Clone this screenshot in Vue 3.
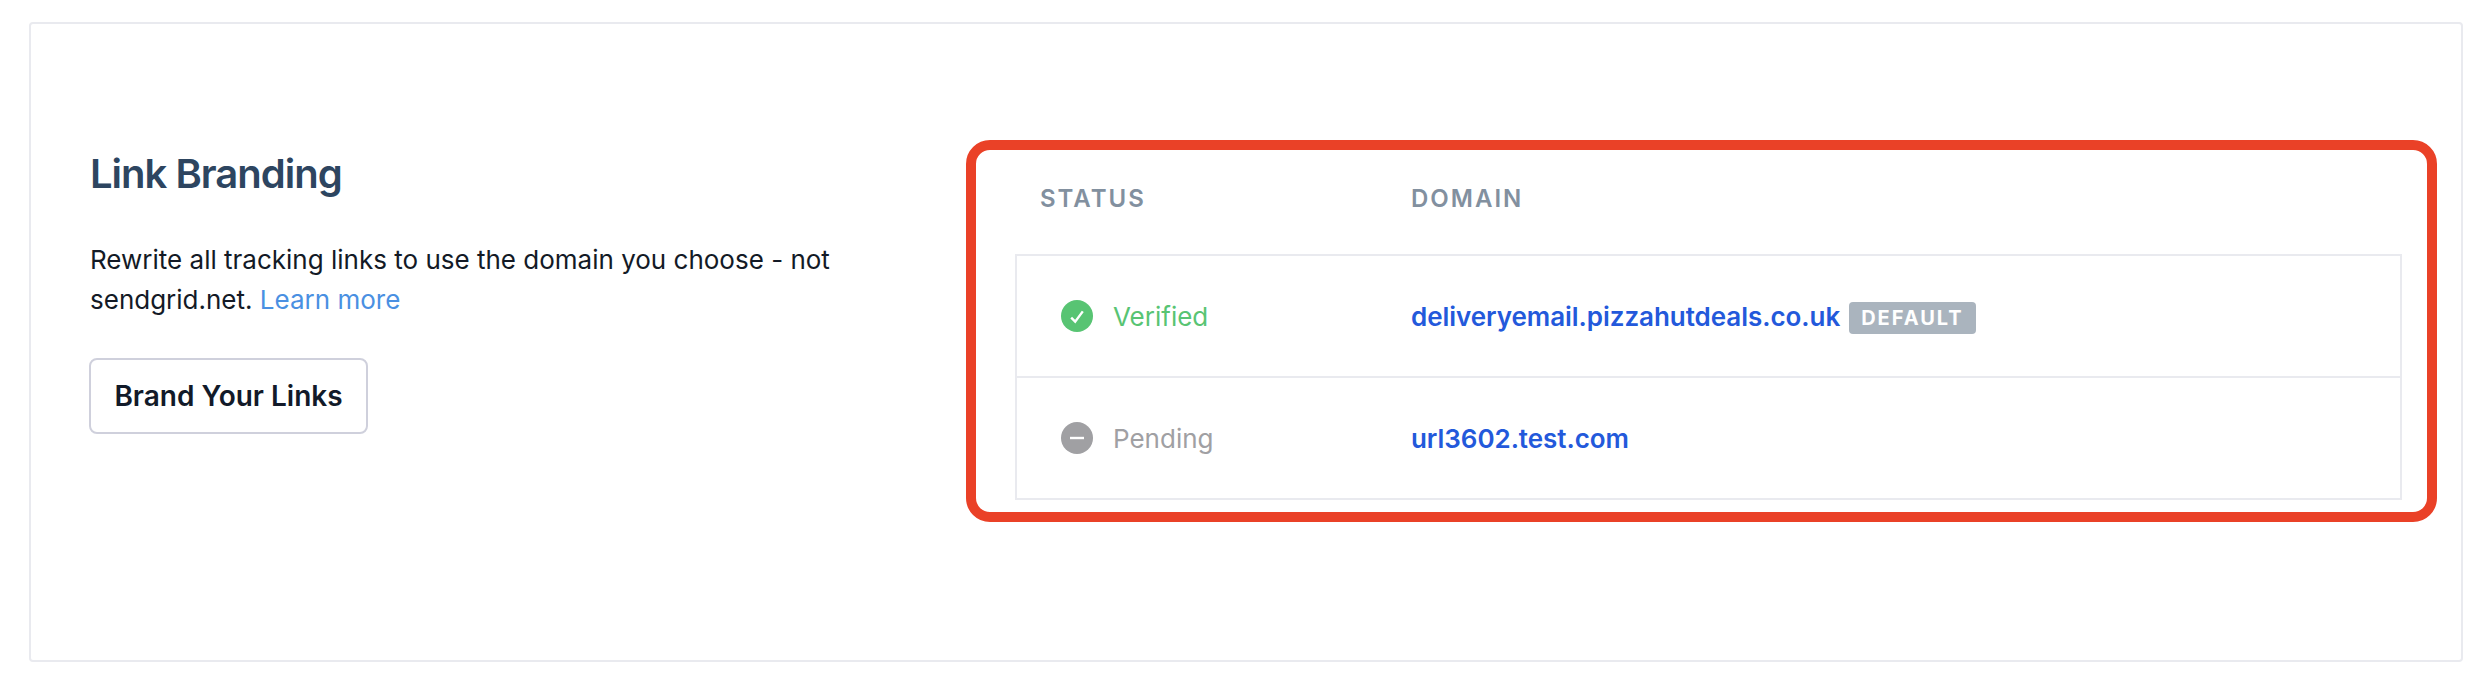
<template>
  <div class="page">
    <section class="card">
      <div class="intro">
        <h2 class="title">Link Branding</h2>
        <p class="desc">
          Rewrite all tracking links to use the domain you choose - not sendgrid.net.
          <a class="learn">Learn more</a>
        </p>
        <button class="brand-btn">Brand Your Links</button>
      </div>

      <div class="highlight">
        <div class="head">
          <span class="head-status">STATUS</span>
          <span>DOMAIN</span>
        </div>
        <div class="table">
          <div class="row" v-for="row in rows" :key="row.domain">
            <div class="status" :class="row.kind">
              <svg class="dot" viewBox="0 0 32 32" width="32" height="32">
                <circle cx="16" cy="16" r="16" />
                <path v-if="row.kind === 'verified'" d="M10.2 17.6L14.2 21.6L21.8 11.4" />
                <path v-else d="M9 16h14" />
              </svg>
              <span>{{ row.label }}</span>
            </div>
            <div class="domain">
              <a class="domain-link">{{ row.domain }}</a>
              <span class="tag" v-if="row.isDefault">DEFAULT</span>
            </div>
          </div>
        </div>
      </div>
    </section>
  </div>
</template>

<script setup>
const rows = [
  { kind: 'verified', label: 'Verified', domain: 'deliveryemail.pizzahutdeals.co.uk', isDefault: true },
  { kind: 'pending', label: 'Pending', domain: 'url3602.test.com', isDefault: false },
]
</script>

<style>
html,
body {
  background: #fff;
}
</style>

<style scoped>
.page {
  padding: 22px 23px 0 29px;
  font-family: Inter, "Liberation Sans", sans-serif;
}
.card {
  display: flex;
  align-items: flex-start;
  height: 640px;
  box-sizing: border-box;
  padding: 116px 24px 0 59px;
  border: 2px solid #e9eaef;
  border-radius: 4px;
}
.intro {
  width: 876px;
  flex-shrink: 0;
}
.title {
  margin: 12px 0 0;
  font-size: 40px;
  line-height: 44px;
  font-weight: 600;
  letter-spacing: -1px;
  color: #2d4560;
}
.desc {
  width: 780px;
  margin: 44px 0 0;
  font-size: 26px;
  line-height: 40px;
  color: #131a26;
}
.learn {
  color: #4a90e2;
}
.brand-btn {
  display: block;
  height: 76px;
  width: 279px;
  margin: 38px 0 0 -1px;
  padding: 0;
  border: 2px solid #cfd0dc;
  border-radius: 8px;
  background: #fff;
  font-family: inherit;
  font-size: 28px;
  font-weight: 600;
  color: #121a29;
}
.highlight {
  flex: 1;
  height: 382px;
  box-sizing: border-box;
  padding: 0 25px 0 39px;
  border: 10px solid #ea4127;
  border-radius: 24px;
}
.head {
  display: flex;
  align-items: center;
  height: 104px;
  box-sizing: border-box;
  padding: 0 0 8px 25px;
  font-size: 24px;
  font-weight: 600;
  letter-spacing: 2px;
  color: #82909f;
}
.head-status {
  width: 371px;
}
.table {
  border: 2px solid #e9eaef;
}
.row {
  display: flex;
  align-items: center;
  height: 120px;
  padding-left: 44px;
}
.row + .row {
  border-top: 2px solid #e9eaef;
}
.status {
  display: flex;
  align-items: center;
  gap: 20px;
  width: 350px;
  font-size: 26px;
}
.status.verified {
  color: #58c473;
}
.status.pending {
  color: #a0a0a3;
}
.dot {
  flex-shrink: 0;
}
.verified .dot circle {
  fill: #58c473;
}
.pending .dot circle {
  fill: #a0a0a3;
}
.dot path {
  fill: none;
  stroke: #fff;
  stroke-width: 2.4;
}
.domain {
  display: flex;
  align-items: center;
  gap: 9px;
}
.domain-link {
  font-size: 26px;
  font-weight: 600;
  letter-spacing: -0.05px;
  color: #2359db;
}
.tag {
  margin-top: 3px;
  padding: 0 12px;
  height: 32px;
  line-height: 32px;
  border-radius: 4px;
  background: #aab4be;
  color: #fff;
  font-size: 20px;
  font-weight: 700;
  letter-spacing: 2px;
}
</style>
